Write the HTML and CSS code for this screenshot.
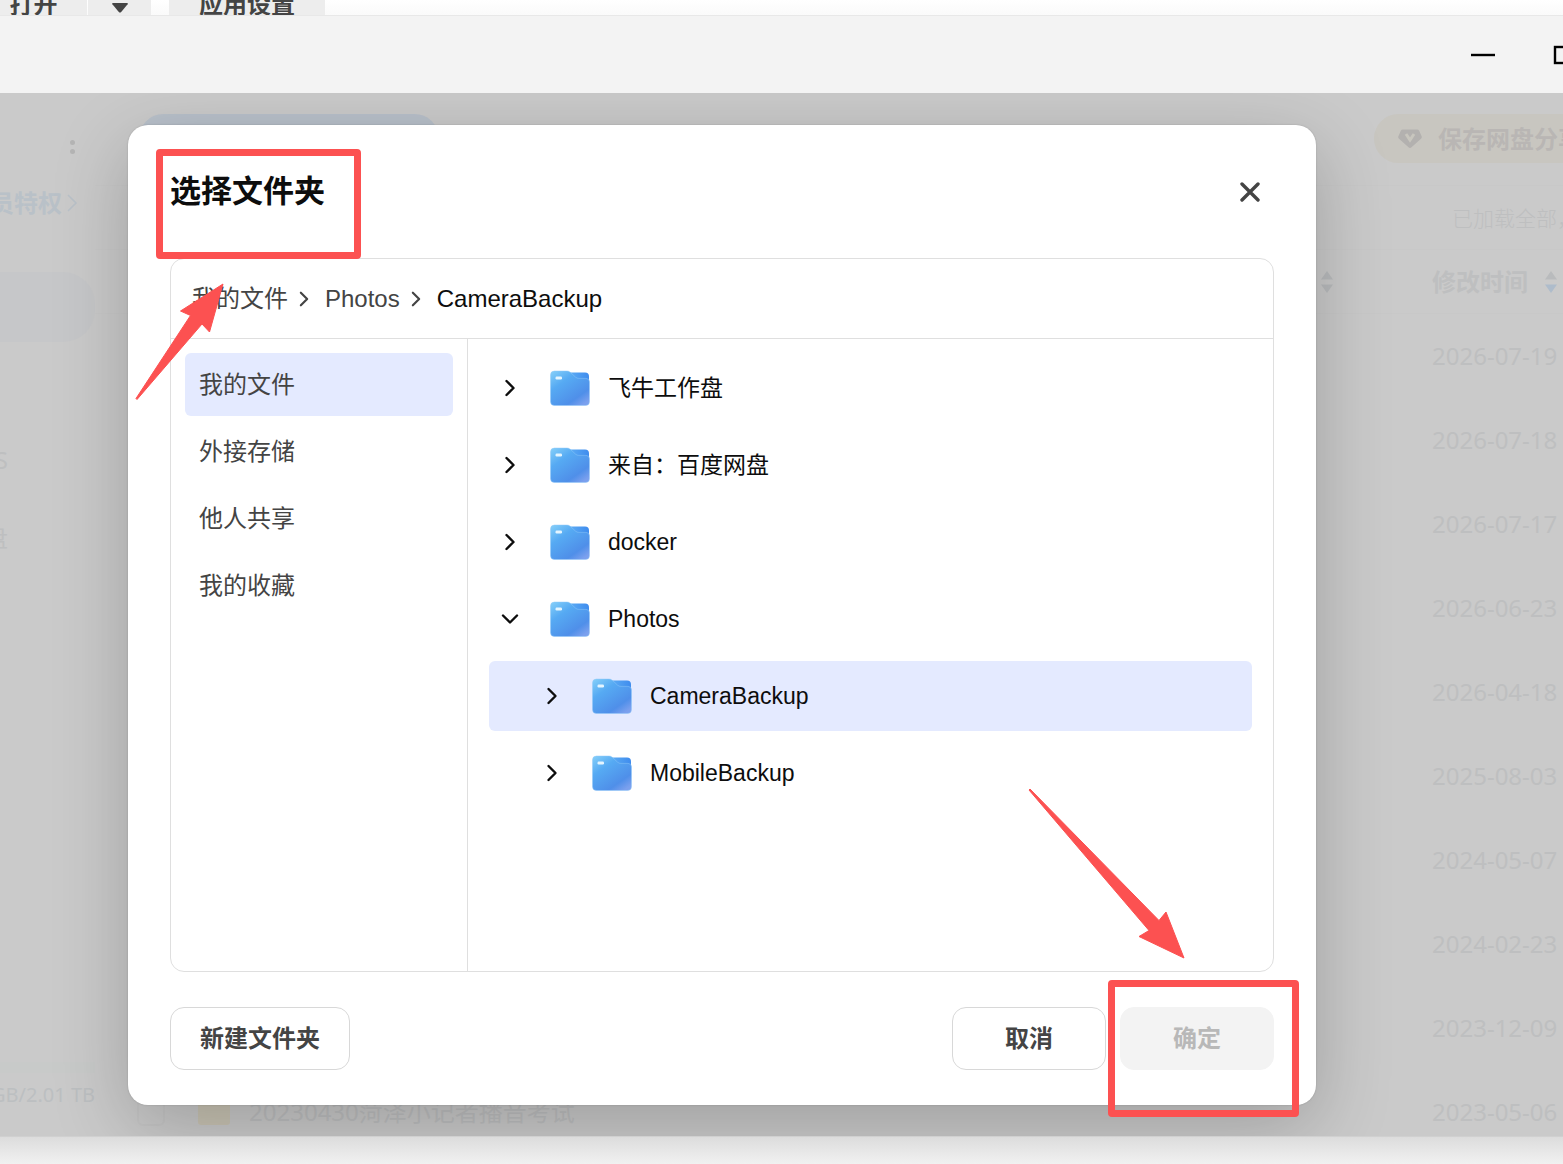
FILE: index.html
```html
<!DOCTYPE html>
<html lang="zh-CN">
<head>
  <meta charset="UTF-8" />
  <meta name="viewport" content="width=device-width, initial-scale=1.0"/>
  <title>选择文件夹</title>
  <link rel="stylesheet" href="styles.css">
</head>
<body>
  <!-- shared icons -->
  <svg class="sprite" aria-hidden="true">
    <defs>
      <linearGradient id="folderFront" x1="0" y1="0" x2="0.8" y2="1">
        <stop offset="0" stop-color="#86d0f9"/>
        <stop offset="0.35" stop-color="#56aaf3"/>
        <stop offset="0.8" stop-color="#4f8fe9"/>
        <stop offset="1" stop-color="#7ba0ee"/>
      </linearGradient>
      <linearGradient id="folderBack" x1="0" y1="0" x2="1" y2="0">
        <stop offset="0" stop-color="#64b5f5"/>
        <stop offset="1" stop-color="#3f8cee"/>
      </linearGradient>
    </defs>
    <symbol id="folder" viewBox="0 0 40 36">
      <path d="M14 2.500h21a4 4 0 0 1 4 4v14H14z" fill="url(#folderBack)"/>
      <path d="M4.500 1h12.500a5 5 0 0 1 3.200 1.200l5.300 4.900a5 5 0 0 0 3.400 1.300H36a3.500 3.500 0 0 1 3.500 3.500v19.600a4 4 0 0 1-4 4h-31a4 4 0 0 1-4-4V5a4 4 0 0 1 4-4z" fill="url(#folderFront)" stroke="#8fc8f8" stroke-opacity=".6" stroke-width=".8"/>
      <rect x="5.500" y="6.500" width="6.500" height="3" rx="1.200" fill="#e4f5ff"/>
    </symbol>
    <symbol id="chevron" viewBox="0 0 20 20">
      <path d="M6.500 3l7 7-7 7" fill="none" stroke="currentColor" stroke-width="2.400" stroke-linecap="round" stroke-linejoin="round"/>
    </symbol>
    <symbol id="sort" viewBox="0 0 14 24">
      <path d="M7 1l6 8.500H1z"/>
      <path d="M7 23l6-8.500H1z"/>
    </symbol>
  </svg>

  <div class="toolstrip">
    <button class="strip-btn strip-open">打开</button>
    <button class="strip-btn strip-more" aria-label="更多"><svg width="18" height="10" viewBox="0 0 18 10"><path d="M2 0h14q1.500 0 .6 1.200L10.200 9q-1.200 1-2.400 0L1.400 1.200Q.5 0 2 0z" fill="#444"/></svg></button>
    <button class="strip-btn strip-settings">应用设置</button>
  </div>

  <header class="titlebar">
    <button class="win-btn" aria-label="最小化"><svg width="24" height="24"><path d="M0 12h24" stroke="#000" stroke-width="2.400"/></svg></button>
    <button class="win-btn" aria-label="最大化"><svg width="20" height="20"><rect x="2" y="2" width="16" height="16" fill="none" stroke="#000" stroke-width="2.400"/></svg></button>
  </header>

  <main class="window">
    <aside class="sidebar">
      <button class="dots" aria-label="菜单"><i></i><i></i></button>
      <a class="vip" href="#">员特权<svg width="12" height="20" viewBox="0 0 12 20"><path d="M2 2l8 8-8 8" fill="none" stroke="currentColor" stroke-width="1.600"/></svg></a>
      <div class="side-active"></div>
      <div class="side-item side-first">S</div>
      <div class="side-item">盘</div>
      <div class="storage">
        <div class="storage-bar"></div>
        GB/2.01 TB
      </div>
    </aside>

    <section class="files">
      <div class="files-top">
        <div class="tab-pill"></div>
        <button class="save-pill"><svg width="24" height="20" viewBox="0 0 24 20"><path d="M5 .5h14q1.500 0 2.200 1.300l2.400 5.400q.6 1.500-.6 2.500l-9.500 8.600q-1.500 1.200-3 0L1 9.700Q-.2 8.700.4 7.200l2.400-5.400Q3.500.5 5 .5z" fill="#b3b1af"/><path d="M8 5l4 6 4-6" fill="none" stroke="#c8c6be" stroke-width="3"/></svg>保存网盘分享</button>
      </div>
      <div class="files-status">已加载全部，共</div>
      <table class="file-table">
        <thead>
          <tr>
            <th class="col-name"></th>
            <th class="col-size"><svg class="sort" width="14" height="24"><use href="#sort"/></svg></th>
            <th class="col-date"><div class="date-head">修改时间<svg class="sort" width="14" height="24" viewBox="0 0 14 24"><path d="M7 1l6 8.500H1z"/><path class="sort-on" d="M7 23l6-8.500H1z"/></svg></div></th>
          </tr>
        </thead>
        <tbody>
          <tr><td></td><td></td><td>2026-07-19</td></tr>
          <tr><td></td><td></td><td>2026-07-18</td></tr>
          <tr><td></td><td></td><td>2026-07-17</td></tr>
          <tr><td></td><td></td><td>2026-06-23</td></tr>
          <tr><td></td><td></td><td>2026-04-18</td></tr>
          <tr><td></td><td></td><td>2025-08-03</td></tr>
          <tr><td></td><td></td><td>2024-05-07</td></tr>
          <tr><td></td><td></td><td>2024-02-23</td></tr>
          <tr><td></td><td></td><td>2023-12-09</td></tr>
          <tr>
            <td><div class="file-name"><input type="checkbox" aria-label="选择"><span class="file-icon"></span>20230430菏泽小记者播音考试</div></td>
            <td></td>
            <td>2023-05-06</td>
          </tr>
        </tbody>
      </table>
    </section>

    <div class="overlay">
      <div class="dialog" role="dialog" aria-labelledby="dialogTitle">
        <div class="dialog-head">
          <h1 id="dialogTitle">选择文件夹</h1>
          <button class="close" aria-label="关闭"><svg width="20" height="20" viewBox="0 0 20 20"><path d="M2 2l16 16M18 2L2 18" stroke="#444" stroke-width="3.400" stroke-linecap="round"/></svg></button>
        </div>

        <div class="picker">
          <nav class="crumbs">
            <a href="#">我的文件</a>
            <svg width="18" height="18"><use href="#chevron"/></svg>
            <a href="#">Photos</a>
            <svg width="18" height="18"><use href="#chevron"/></svg>
            <a href="#" class="current">CameraBackup</a>
          </nav>
          <div class="panes">
            <div class="places">
              <button class="place active">我的文件</button>
              <button class="place">外接存储</button>
              <button class="place">他人共享</button>
              <button class="place">我的收藏</button>
            </div>
            <div class="tree">
              <button class="node"><svg class="caret"><use href="#chevron"/></svg><svg class="folder"><use href="#folder"/></svg>飞牛工作盘</button>
              <button class="node"><svg class="caret"><use href="#chevron"/></svg><svg class="folder"><use href="#folder"/></svg>来自：百度网盘</button>
              <button class="node"><svg class="caret"><use href="#chevron"/></svg><svg class="folder"><use href="#folder"/></svg>docker</button>
              <button class="node"><svg class="caret open"><use href="#chevron"/></svg><svg class="folder"><use href="#folder"/></svg>Photos</button>
              <button class="node child active"><svg class="caret"><use href="#chevron"/></svg><svg class="folder"><use href="#folder"/></svg>CameraBackup</button>
              <button class="node child"><svg class="caret"><use href="#chevron"/></svg><svg class="folder"><use href="#folder"/></svg>MobileBackup</button>
            </div>
          </div>
        </div>

        <div class="dialog-foot">
          <button class="btn btn-new">新建文件夹</button>
          <button class="btn">取消</button>
          <button class="btn" disabled>确定</button>
        </div>

        <!-- red markers -->
        <div class="mark mark-title"></div>
        <div class="mark mark-ok"></div>
        <svg class="arrow arrow-title" width="92" height="120"><path d="M2 116.500L56.500 33.500 46.500 29 89 2 75.500 50 68 42 3 117.500z"/></svg>
        <svg class="arrow arrow-ok" width="160" height="174"><path d="M4 3L133 134.500 140 126 158 172 113 150.500 123 144.500 3 4z"/></svg>
      </div>
    </div>
  </main>
  <footer class="under"></footer>
</body>
</html>
```
FILE: styles.css
```css
:root {
  --red: #fc5151;
  --line: #dfdfdf;
  --select: #e4eaff;
  --cjk: "Noto Sans CJK SC", sans-serif;
  --faint: #bebfc0;
}

* {
  box-sizing: border-box;
}

body {
  margin: 0;
  height: 100vh;
  display: flex;
  flex-direction: column;
  overflow: hidden;
  font-family: "Liberation Sans", var(--cjk);
  font-size: 24px;
  line-height: 1.5;
  background: #f3f3f3;
}

button {
  border: 0;
  padding: 0;
  background: none;
  font: inherit;
  color: inherit;
}

a {
  color: inherit;
  text-decoration: none;
}

svg {
  flex: none;
}

.sprite {
  position: absolute;
  width: 0;
  height: 0;
}

/* strip cut off at the top */
.toolstrip {
  flex: none;
  height: 16px;
  display: flex;
  align-items: flex-end;
  overflow: hidden;
  background: linear-gradient(#fff, #fafafa);
  border-bottom: 1px solid #e8e8e8;
}

.strip-btn {
  flex: none;
  height: 44px;
  margin-bottom: -12px;
  background: #ededed;
  color: #444;
  font-weight: bold;
}

.strip-open {
  width: 87px;
  padding-right: 20px;
}

.strip-more {
  width: 63px;
  margin-left: 1px;
}

.strip-settings {
  width: 156px;
  margin-left: 18px;
}

.titlebar {
  flex: none;
  height: 77px;
  display: flex;
  justify-content: flex-end;
}

.win-btn {
  flex: none;
  width: 80px;
  display: flex;
  align-items: center;
  justify-content: center;
}

.win-btn:last-child {
  margin-right: -40px;
}

.window {
  flex: 1;
  min-height: 0;
  position: relative;
  display: flex;
  overflow: hidden;
  background: #cacaca;
  color: var(--faint);
  font-family: "Noto Sans", var(--cjk);
}

.under {
  flex: none;
  height: 28px;
  background: linear-gradient(#dcdcdc, #f1f1f1);
  border-top: 1px solid #d0d0d0;
}

/* dimmed sidebar */
.sidebar {
  flex: none;
  width: 95px;
  display: flex;
  flex-direction: column;
  align-items: flex-end;
  overflow: hidden;
}

.dots {
  display: flex;
  flex-direction: column;
  gap: 4px;
  margin: 47px 20px 0 0;
}

.dots i {
  width: 5px;
  height: 5px;
  border-radius: 50%;
  background: #b4b4b4;
}

.vip {
  display: flex;
  align-items: center;
  gap: 4px;
  margin: 31px 17px 0 0;
  line-height: 36px;
  white-space: nowrap;
  font-weight: bold;
  color: #b9c1c8;
}

.side-active {
  width: 100%;
  height: 70px;
  margin-top: 51px;
  border-radius: 0 32px 32px 0;
  background: #c6c7c9;
}

.side-item {
  height: 78px;
  line-height: 78px;
  padding-right: 87px;
}

.side-first {
  margin-top: 79px;
}

.storage {
  width: 100%;
  margin-top: auto;
  margin-bottom: 25px;
  display: flex;
  flex-direction: column;
  align-items: flex-end;
  font-size: 20px;
  line-height: 32px;
  white-space: nowrap;
  color: #bcbfc1;
}

.storage-bar {
  width: 100%;
  height: 11px;
  margin-bottom: 6px;
  background: #c8cac9;
}

/* dimmed file list */
.files {
  flex: 1;
  min-width: 0;
  overflow: hidden;
}

.files-top {
  height: 92px;
  padding: 21px 0 0 44px;
  display: flex;
  align-items: flex-start;
  justify-content: space-between;
}

.tab-pill {
  width: 300px;
  height: 49px;
  border-radius: 25px;
  background: #b8c0ca;
}

.save-pill {
  height: 49px;
  width: 189px;
  padding-left: 24px;
  display: flex;
  align-items: center;
  gap: 16px;
  overflow: hidden;
  border-radius: 25px 0 0 25px;
  background: #c8c6c0;
  color: #b9b6b4;
  font-weight: bold;
  white-space: nowrap;
}

.files-status {
  height: 64px;
  padding-left: calc(100% - 111px);
  line-height: 64px;
  font-size: 21px;
  font-weight: 300;
  white-space: nowrap;
  border-top: 1px solid #c8c8c8;
}

.file-table {
  width: 100%;
  table-layout: fixed;
  border-collapse: collapse;
}

.file-table th {
  height: 64px;
  padding: 0;
  text-align: left;
  border-top: 1px solid #c8c8c8;
  border-bottom: 1px solid #c8c8c8;
}

.file-table td {
  height: 84px;
  padding: 0;
  white-space: nowrap;
}

.file-table .col-size {
  width: 160px;
  padding-left: 48px;
}

.file-table .col-date {
  width: 131px;
}

.date-head {
  display: flex;
  align-items: center;
  gap: 16px;
  white-space: nowrap;
}

.sort {
  display: block;
  fill: #b9bbbd;
}

.sort-on {
  fill: #aebccb;
}

.file-name {
  display: flex;
  align-items: center;
  padding-left: 42px;
}

.file-name input {
  appearance: none;
  width: 28px;
  height: 28px;
  margin: 0;
  border: 2px solid #c6c6c6;
  border-radius: 6px;
}

.file-icon {
  width: 32px;
  height: 26px;
  margin: 0 19px 0 33px;
  border-radius: 3px;
  background: #cac5b5;
}

.overlay {
  position: absolute;
  inset: 0;
  display: flex;
  padding: 32px 247px 31px 128px;
}

.dialog {
  position: relative;
  flex: 1;
  display: flex;
  flex-direction: column;
  padding: 0 42px 35px;
  border-radius: 20px;
  background: #fff;
  color: #444;
  font-family: "Liberation Sans", var(--cjk);
  box-shadow: 0 22px 76px rgba(0, 0, 0, 0.22), 0 0 2px rgba(0, 0, 0, 0.18);
}

.dialog-head {
  height: 133px;
  display: flex;
  align-items: center;
  justify-content: space-between;
}

.dialog-head h1 {
  margin: 0;
  font-size: 31px;
  line-height: 46px;
  color: #0d0d0d;
}

.close {
  width: 48px;
  height: 48px;
  display: flex;
  align-items: center;
  justify-content: center;
}

.picker {
  flex: 1;
  display: flex;
  flex-direction: column;
  border: 1px solid var(--line);
  border-radius: 14px;
}

.crumbs {
  height: 80px;
  padding-left: 21px;
  display: flex;
  align-items: center;
  gap: 7px;
  border-bottom: 1px solid var(--line);
}

.crumbs a + svg + a {
  margin-left: 5px;
}

.crumbs .current {
  color: #0d0d0d;
}

.panes {
  flex: 1;
  display: flex;
}

.places {
  width: 297px;
  padding: 14px;
  display: flex;
  flex-direction: column;
  gap: 4px;
  border-right: 1px solid var(--line);
}

.place {
  height: 63px;
  padding-left: 14px;
  text-align: left;
  border-radius: 6px;
}

.tree {
  flex: 1;
  padding: 14px 21px;
  display: flex;
  flex-direction: column;
  gap: 7px;
}

.node {
  height: 70px;
  padding-left: 11px;
  display: flex;
  align-items: center;
  border-radius: 6px;
  font-size: 23px;
  color: #0d0d0d;
}

.node.child {
  padding-left: 53px;
}

.active {
  background: var(--select);
}

.caret {
  width: 20px;
  height: 20px;
}

.caret.open {
  transform: rotate(90deg);
}

.folder {
  width: 40px;
  height: 36px;
  margin: 0 18px 0 30px;
}

.dialog-foot {
  margin-top: 35px;
  display: flex;
  gap: 14px;
}

.btn {
  width: 154px;
  height: 63px;
  border: 1px solid #d8d8d8;
  border-radius: 14px;
  font-weight: bold;
}

.btn-new {
  width: 180px;
  margin-right: auto;
}

.btn:disabled {
  border-color: #f3f3f3;
  background: #f3f3f3;
  color: #b8b8b8;
}

.mark {
  position: absolute;
  border: 7px solid var(--red);
  border-radius: 4px;
  pointer-events: none;
}

.mark-title {
  left: 28px;
  top: 24px;
  width: 205px;
  height: 110px;
}

.mark-ok {
  right: 17px;
  bottom: -12px;
  width: 191px;
  height: 137px;
}

.arrow {
  position: absolute;
  fill: var(--red);
  stroke: var(--red);
  stroke-linejoin: round;
  pointer-events: none;
}

.arrow-title {
  left: 6px;
  top: 157px;
}

.arrow-ok {
  right: 130px;
  bottom: 145px;
}
```
